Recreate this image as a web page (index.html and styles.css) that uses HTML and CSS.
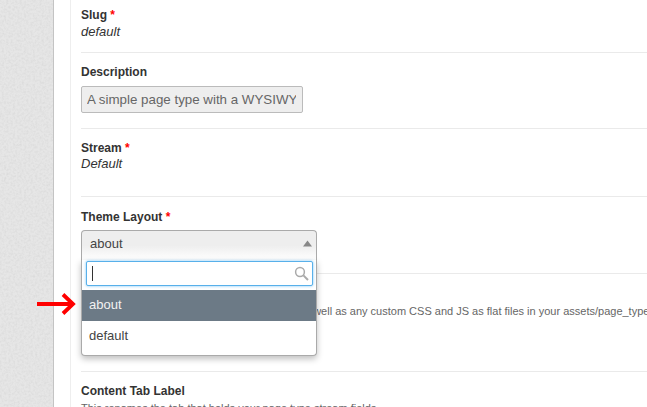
FILE: index.html
```html
<!DOCTYPE html>
<html lang="en">
<head>
<meta charset="utf-8">
<title>Page type</title>
<link rel="stylesheet" href="styles.css">
</head>
<body>
<div class="page">
  <aside class="rail">
    <svg class="grain" width="53" height="407" aria-hidden="true">
      <filter id="noise" x="0" y="0" width="100%" height="100%">
        <feTurbulence type="fractalNoise" baseFrequency="0.45" numOctaves="2" seed="4"/>
        <feColorMatrix type="matrix" values="0 0 0 0 0.4  0 0 0 0 0.4  0 0 0 0 0.4  0.35 0 0 0 -0.13"/>
      </filter>
      <rect width="53" height="407" fill="#e6e6e6"/>
      <rect width="53" height="407" filter="url(#noise)"/>
    </svg>
  </aside>
  <main class="panel">
    <div class="form">
      <section class="field field-slug">
        <label class="label">Slug <span class="req">*</span></label>
        <div class="value value-slug">default</div>
      </section>
      <section class="field field-desc">
        <label class="label">Description</label>
        <div class="readonly"><span>A simple page type with a WYSIWYG editor</span></div>
      </section>
      <section class="field field-stream">
        <label class="label">Stream <span class="req">*</span></label>
        <div class="value">Default</div>
      </section>
      <section class="field field-theme">
        <label class="label">Theme Layout <span class="req">*</span></label>
        <div class="select-wrap">
          <div class="select-head">
            <span>about</span>
            <svg class="caret" width="9" height="7" viewBox="0 0 9 7" aria-hidden="true"><path d="M4.5 0.5 9 6.5H0Z" fill="#888"/></svg>
          </div>
          <div class="dropdown">
            <div class="search">
              <span class="text-cursor"></span>
              <svg class="lens" width="15" height="15" viewBox="0 0 15 15" aria-hidden="true"><circle cx="6" cy="6" r="4.4" fill="none" stroke="#aaa" stroke-width="1.5"/><path d="M9.4 9.4 14 14" stroke="#aaa" stroke-width="2" fill="none"/></svg>
            </div>
            <ul class="options">
              <li class="option active">about</li>
              <li class="option">default</li>
            </ul>
          </div>
        </div>
      </section>
      <section class="field field-help">
        <p class="help">Your layout can use its own HTML template, as well as any custom CSS and JS as flat files in your assets/page_types folder.</p>
      </section>
      <section class="field field-tab">
        <label class="label">Content Tab Label</label>
        <p class="help">This renames the tab that holds your page type stream fields.</p>
      </section>
    </div>
  </main>
  <svg class="arrow" width="40" height="24" viewBox="0 0 40 24" aria-hidden="true"><path d="M0 12H36M26 2.500 36 12 26 21.500" fill="none" stroke="#f00" stroke-width="3.800"/></svg>
  <svg class="pointer" width="15" height="20" viewBox="0 0 15 20" aria-hidden="true"><path d="M1 1V16L4.700 12.800 7.300 18.800 10 17.600 7.500 12H12.500Z" fill="#fff" stroke="#000" stroke-width="1.500"/></svg>
</div>
</body>
</html>
```
FILE: styles.css
```css
* { box-sizing: border-box; }
html, body { margin: 0; padding: 0; height: 100%; overflow: hidden; background: #fff; }
body { font-family: "Liberation Sans", Arial, sans-serif; font-size: 12px; color: #333; }
.page { display: flex; position: relative; width: 647px; height: 407px; overflow: hidden; }
.rail { flex: 0 0 54px; border-right: 1px solid #c4c4c4; }
.grain { display: block; }
.panel { flex: 1; padding-left: 16px; min-width: 0; }
.form { border-left: 1px solid #eee; padding-left: 10px; height: 407px; width: 640px; }
.field { border-bottom: 1px solid #eaeaea; }
.label { display: block; font-weight: bold; font-size: 12px; line-height: 16px; color: #333; }
.req { color: #f00; }
.value { font-style: italic; font-size: 13px; line-height: 16px; color: #333; }
.field-slug { height: 53px; padding-top: 7px; }
.value-slug { margin-top: 1px; }
.field-desc { height: 76px; padding-top: 11px; }
.readonly { width: 222px; height: 27px; margin-top: 6px; padding: 0 6px 0 5px; border: 1px solid #bbb; border-radius: 2px; background: #eee; color: #666; font-size: 13.333px; line-height: 25px; overflow: hidden; white-space: nowrap; }
.readonly span { display: block; overflow: hidden; }
.field-stream { height: 68px; padding-top: 11px; }
.field-theme { height: 77px; padding-top: 12px; }
.select-wrap { position: relative; margin-top: 5px; width: 236px; }
.select-head { display: flex; justify-content: space-between; align-items: center; height: 30px; padding: 0 4px 4px 8px; border: 1px solid #aaa; border-bottom: 0; border-radius: 4px 4px 0 0; background: linear-gradient(#eee, #eee 50%, #fff); font-size: 13px; color: #444; }
.dropdown { position: absolute; z-index: 2; top: 30px; left: 0; width: 236px; height: 96px; background: #fff; border: 1px solid #aaa; border-top: 0; border-radius: 0 0 4px 4px; box-shadow: 0 3px 6px rgba(0,0,0,.25); padding-top: 1px; }
.search { position: relative; height: 25px; margin: 0 3px 0 4px; border: 1px solid #58b0ea; border-radius: 2px; box-shadow: 0 0 3px #7cc4f2; background: #fff; }
.text-cursor { position: absolute; left: 5px; top: 4px; width: 1px; height: 15px; background: #333; }
.lens { position: absolute; right: 3px; top: 4px; }
.options { list-style: none; margin: 4px 0 0; padding: 0; }
.option { height: 31px; padding-left: 7px; font-size: 13px; line-height: 29px; color: #444; }
.option.active { background: #6c7a86; color: #f2f2f2; }
.field-help { height: 98px; padding-top: 29px; }
.help { margin: 0; font-size: 11px; line-height: 16px; color: #666; white-space: nowrap; }
.field-tab { height: 40px; padding-top: 11px; border: 0; }
.field-tab .help { margin-top: 1px; }
.arrow { position: absolute; left: 37px; top: 292px; }
.pointer { position: absolute; left: 233px; top: 310px; }
```
